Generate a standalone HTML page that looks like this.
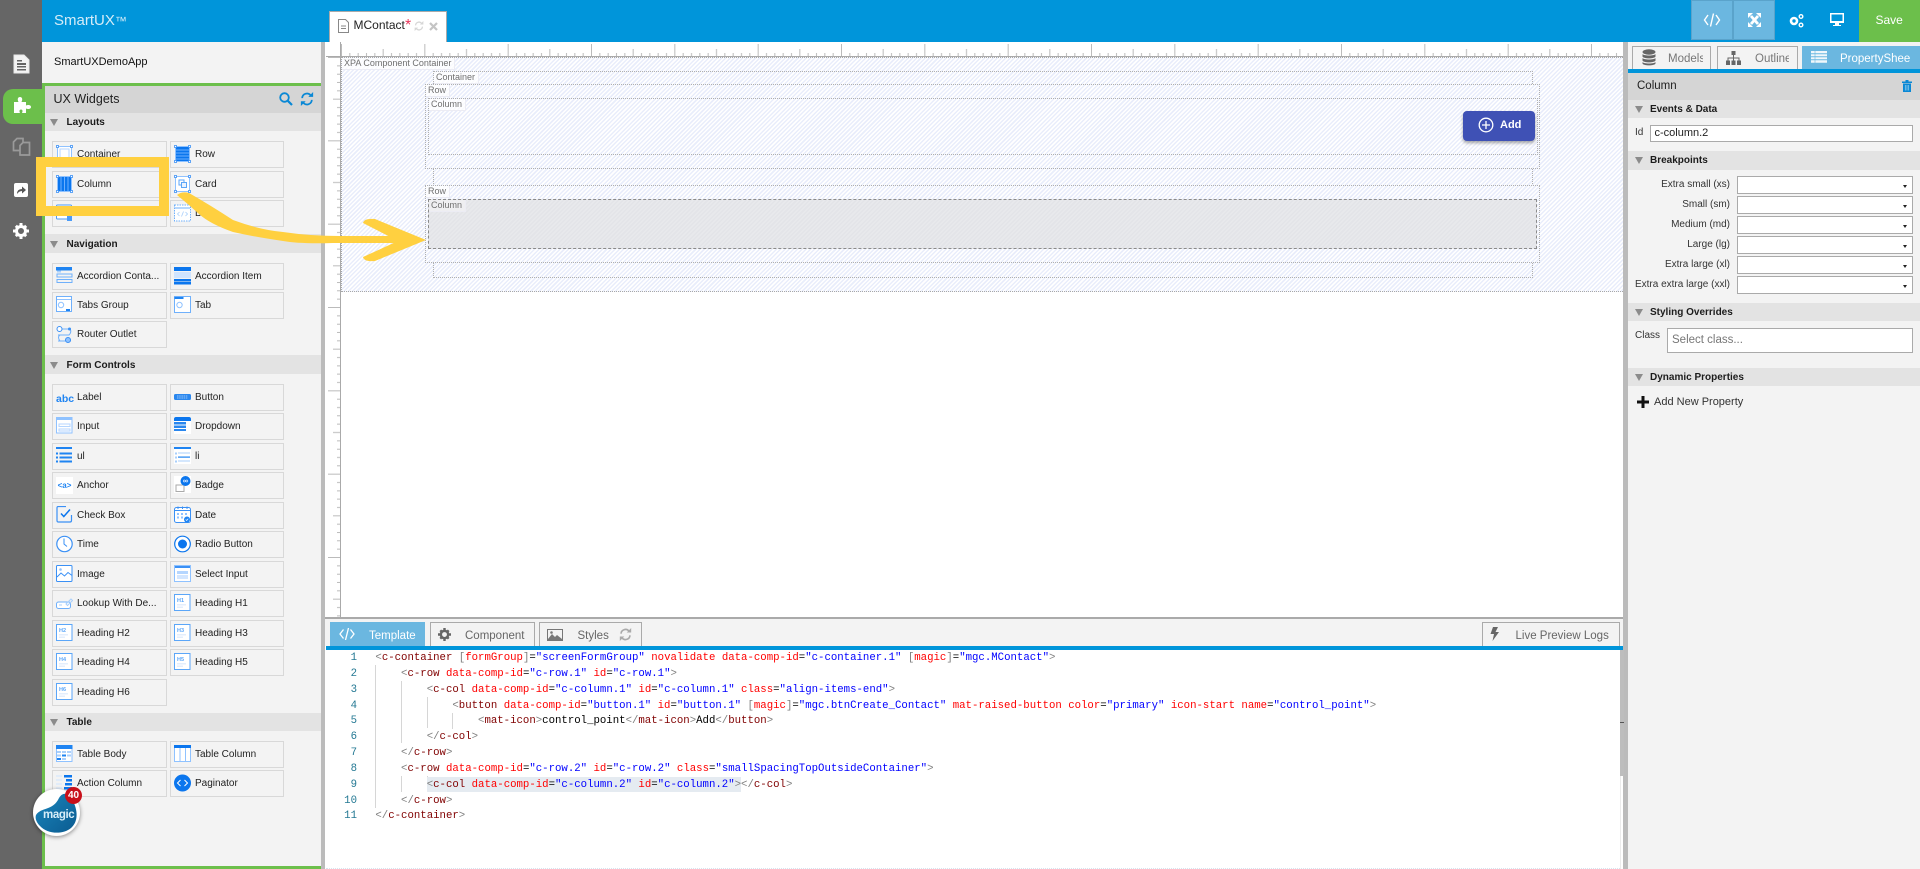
<!DOCTYPE html>
<html lang="en"><head><meta charset="utf-8"><title>SmartUX</title>
<style>
*{box-sizing:border-box}
html,body{margin:0;padding:0;width:1920px;height:869px;overflow:hidden;background:#fff;font-family:"Liberation Sans",Arial,sans-serif;color:#222}
.a{position:absolute}
.t{position:absolute;white-space:nowrap}
.w{position:absolute;width:115px;height:27px;border:1px solid #d8d8d8;background:#f3f3f3}
.w.c2{width:114px}
.w svg{position:absolute;left:3px;top:3px;width:17px;height:18px}
.w span{position:absolute;left:24px;top:6px;font-size:10px;line-height:14px;color:#222;white-space:nowrap}
.sec{position:absolute;left:45px;width:276px;background:#e3e3e3;font-weight:bold;font-size:10px;color:#1c1c1c}
.sec i{position:absolute;left:5px;top:50%;margin-top:-3px;border-left:4.5px solid transparent;border-right:4.5px solid transparent;border-top:7px solid #8b8b8b}
.sec b{position:absolute;left:21.5px;top:50%;margin-top:-6px;line-height:14px;white-space:nowrap}
.rs{position:absolute;left:1628px;width:292px;height:18px;background:#e3e3e3;font-weight:bold;font-size:10px;color:#1c1c1c}
.rs i{position:absolute;left:7px;top:6px;border-left:4.5px solid transparent;border-right:4.5px solid transparent;border-top:7px solid #8b8b8b}
.rs b{position:absolute;left:22px;top:3px;line-height:14px;white-space:nowrap}
.lbl{position:absolute;right:190px;margin-top:1px;font-size:10px;line-height:14px;color:#333;white-space:nowrap}
.sel{position:absolute;left:1737px;width:176px;height:18px;background:#fff;border:1px solid #aaa}
.sel:after{content:"";position:absolute;right:5px;top:8px;border-left:2.5px solid transparent;border-right:2.5px solid transparent;border-top:3px solid #222}
.box{position:absolute;border:1px dotted #b0b0b0}
.hatch{background:repeating-linear-gradient(135deg,#fff 0,#fff 1.5px,#e9edfb 1.5px,#e9edfb 3px) fixed}
.cl{position:absolute;font-size:9px;line-height:11px;color:#6f6f6f;background:rgba(255,255,255,.72);padding:0 3px 0 2px;white-space:nowrap;border-right:1px solid #ececf4;border-bottom:1px solid #ececf4}
.tab{position:absolute;border:1px solid #aaa;border-bottom:0;background:#f3f3f3;color:#666;font-size:11.5px}
.ln{position:absolute;width:32px;left:325px;text-align:right;font:10.69px/16px "Liberation Mono",monospace;color:#237893;height:16px;margin-top:1px}
.cd{position:absolute;left:375.4px;font:10.69px/16px "Liberation Mono",monospace;white-space:pre;height:16px;color:#000;margin-top:1px}
.cd u{text-decoration:none;color:#808080}.cd s{text-decoration:none;color:#800000}.cd em{font-style:normal;color:#f00}.cd q{quotes:none;color:#00f}
.g{position:absolute;width:1px;background:#d6d6d6}
</style></head><body>
<svg width="0" height="0" style="position:absolute">
<defs>
<symbol id="i-cont" viewBox="0 0 17 18"><rect x="1.5" y="1.5" width="14" height="15" fill="#fff" stroke="#8fc2ff"/><rect x="4" y="4" width="9" height="10" fill="none" stroke="#b5d6ff"/><g fill="#fff" stroke="#3a90f5" stroke-width=".8"><rect x=".5" y=".5" width="2" height="2"/><rect x="14.5" y=".5" width="2" height="2"/><rect x=".5" y="15.5" width="2" height="2"/><rect x="14.5" y="15.5" width="2" height="2"/></g></symbol>
<symbol id="i-row" viewBox="0 0 17 18"><rect x="1.5" y="1.5" width="14" height="15" fill="#0b76ee" stroke="#8fc2ff"/><path d="M2 5h13M2 8h13M2 11h13M2 14h13" stroke="#6cb0ff"/><g fill="#fff" stroke="#3a90f5" stroke-width=".8"><rect x=".5" y=".5" width="2" height="2"/><rect x="14.5" y=".5" width="2" height="2"/><rect x=".5" y="15.5" width="2" height="2"/><rect x="14.5" y="15.5" width="2" height="2"/></g></symbol>
<symbol id="i-col" viewBox="0 0 17 18"><rect x="1.5" y="1.5" width="14" height="15" fill="#0b76ee" stroke="#8fc2ff"/><path d="M5 2v14M8.5 2v14M12 2v14" stroke="#6cb0ff"/><g fill="#fff" stroke="#3a90f5" stroke-width=".8"><rect x=".5" y=".5" width="2" height="2"/><rect x="14.5" y=".5" width="2" height="2"/><rect x=".5" y="15.5" width="2" height="2"/><rect x="14.5" y="15.5" width="2" height="2"/></g></symbol>
<symbol id="i-sec" viewBox="0 0 17 18"><rect x=".5" y="1" width="15" height="14" rx="1" fill="#fff" stroke="#4b9bf7"/><rect x="11" y="12" width="5" height="5" fill="#4b9bf7"/></symbol>
<symbol id="i-card" viewBox="0 0 17 18"><rect x="1.5" y="1.5" width="14" height="15" fill="#fff" stroke="#8fc2ff"/><rect x="5" y="5" width="5" height="5" fill="none" stroke="#5ba6f8"/><rect x="7.5" y="7.5" width="5" height="5" fill="#eaf3ff" stroke="#5ba6f8"/><g fill="#fff" stroke="#3a90f5" stroke-width=".8"><rect x=".5" y=".5" width="2" height="2"/><rect x="14.5" y=".5" width="2" height="2"/><rect x=".5" y="15.5" width="2" height="2"/><rect x="14.5" y="15.5" width="2" height="2"/></g></symbol>
<symbol id="i-code" viewBox="0 0 17 18"><rect x=".5" y="1" width="16" height="16" fill="#fff" stroke="#6fb0fb" stroke-dasharray="1.5 1"/><path d="M1 4h15" stroke="#6fb0fb"/><path d="M5.5 8l-2 2 2 2M11.500 8l2 2-2 2M9.500 7.500l-2 5" fill="none" stroke="#a9cffb" stroke-width=".8"/></symbol>
<symbol id="i-acc" viewBox="0 0 17 18"><rect x="0" y="0" width="16" height="3.500" fill="#1f84f2"/><rect x="1" y="3.500" width="4" height="2" fill="#a9cffb"/><path d="M1 7h15v3H1zM1 12.500h15v3H1z" fill="none" stroke="#6fb0fb"/></symbol>
<symbol id="i-acci" viewBox="0 0 17 18"><rect x="0" y="0" width="17" height="4" fill="#0b76ee"/><rect x="0" y="5" width="17" height="6" fill="#cfe4ff"/><rect x="0" y="12" width="17" height="2.500" fill="#0b76ee"/><rect x="0" y="15" width="17" height="2.500" fill="#0b76ee"/></symbol>
<symbol id="i-tabs" viewBox="0 0 17 18"><rect x=".5" y=".5" width="15" height="15" fill="#fff" stroke="#6fb0fb"/><path d="M1 3.500h14" stroke="#8fc2ff"/><circle cx="5" cy="9" r="2.700" fill="none" stroke="#8fc2ff"/><rect x="10" y="13" width="4" height="2" fill="#1f84f2"/></symbol>
<symbol id="i-tab" viewBox="0 0 17 18"><rect x=".5" y=".5" width="16" height="16" fill="#fff" stroke="#6fb0fb"/><path d="M.5 2h9" stroke="#1f84f2" stroke-width="2"/><circle cx="5.500" cy="9" r="2.700" fill="none" stroke="#8fc2ff"/></symbol>
<symbol id="i-rout" viewBox="0 0 17 18"><path d="M2 4h13M2 10h9M2 16h13M14 4q2 3-1 6H4q-3 2 0 6" fill="none" stroke="#6fb0fb"/><circle cx="3.500" cy="4" r="2.500" fill="#fff" stroke="#3a90f5"/><circle cx="13.500" cy="4" r="1.500" fill="#3a90f5"/><circle cx="12" cy="15" r="2.500" fill="#8fc2ff" stroke="#3a90f5"/></symbol>
<symbol id="i-btn" viewBox="0 0 17 18"><rect x="0" y="6" width="17" height="6" rx="1.500" fill="#2a87ee"/><path d="M3 8h11M3 10h11" stroke="#bcdcff" stroke-width=".7" stroke-dasharray="1.500 .7"/></symbol>
<symbol id="i-inp" viewBox="0 0 17 18"><rect x=".5" y=".5" width="15.500" height="15.500" fill="#fff" stroke="#8fc2ff"/><rect x="1" y="1" width="15" height="2" fill="#8fc2ff"/><rect x="3" y="7" width="11" height="2.500" fill="none" stroke="#b5d6ff"/><rect x="3" y="12" width="11" height="2" fill="none" stroke="#b5d6ff"/></symbol>
<symbol id="i-drop" viewBox="0 0 17 18"><rect width="17" height="17" fill="#fff"/><path d="M0 2q0-2 2-2h13q2 0 2 2v2H0z" fill="#0b76ee"/><path d="M0 5h12v2.500H0zM0 8.500h12V11H0zM0 12h12v2H0z" fill="#2a87ee"/></symbol>
<symbol id="i-ul" viewBox="0 0 17 18"><rect x="0" y="0" width="16" height="2" fill="#1f84f2"/><path d="M0 5.500h2v2H0zM3.500 5.500H16v2H3.500zM0 9.500h2v2H0zM3.500 9.500H16v2H3.500zM0 13.500h2v2H0zM3.500 13.500H16v2H3.500z" fill="#1f84f2"/></symbol>
<symbol id="i-li" viewBox="0 0 17 18"><rect width="17" height="17" fill="#fff"/><rect x="0" y="0" width="17" height="2" fill="#1f84f2"/><path d="M1 5.500h2v2H1zM4 5.500h12v1H4zM1 9.500h2v2H1zM1 13.500h2v2H1zM4 13.500h12v1H4z" fill="#a9cffb"/><path d="M4 9.500h12v1.200H4z" fill="#1f84f2"/></symbol>
<symbol id="i-badge" viewBox="0 0 17 18"><rect width="17" height="17" fill="#fff"/><rect x="2" y="9" width="8" height="6.500" fill="none" stroke="#aaa"/><circle cx="11.500" cy="5" r="5" fill="#0b76ee"/><path d="M9.300 5a1 1 0 1 0 2 0a1 1 0 1 0-2 0M11.800 5a1 1 0 1 0 2 0a1 1 0 1 0-2 0" fill="none" stroke="#cfe4ff" stroke-width=".7"/></symbol>
<symbol id="i-check" viewBox="0 0 17 18"><path d="M15.500 9v5.500q0 1.500-1.500 1.500H2.500Q1 16 1 14.500V2q0-1.500 1.500-1.500H10" fill="none" stroke="#3a90f5" stroke-width="1.200"/><path d="M5 7.500l2.800 3L14 3.500" fill="none" stroke="#0b76ee" stroke-width="1.500"/></symbol>
<symbol id="i-date" viewBox="0 0 17 18"><rect x=".5" y="1.500" width="16" height="15" rx="2" fill="#fff" stroke="#3a90f5"/><path d="M1 4.500h15M4 .5v2.500M8.500 .5v2.500M13 .5v2.500" stroke="#3a90f5"/><path d="M3 7h2v2H3zM7 7h2v2H7zM11 7h2v2h-2zM3 10.500h2v2H3zM7 10.500h2v2H7z" fill="#8fc2ff"/><circle cx="13" cy="13.500" r="3" fill="#1f84f2"/><path d="M11.700 13.500l1 1 1.500-1.800" stroke="#fff" stroke-width=".7" fill="none"/></symbol>
<symbol id="i-time" viewBox="0 0 17 18"><circle cx="8.500" cy="9" r="7.700" fill="#fff" stroke="#3a90f5" stroke-width="1.200"/><path d="M8 3.500V9l3 2.500" fill="none" stroke="#3a90f5"/></symbol>
<symbol id="i-radio" viewBox="0 0 17 18"><circle cx="8.500" cy="9" r="7.800" fill="#fff" stroke="#0b76ee" stroke-width="1.200"/><circle cx="8.500" cy="9" r="4.500" fill="#0b76ee"/></symbol>
<symbol id="i-img" viewBox="0 0 17 18"><rect x=".5" y=".5" width="15.500" height="16" rx="1" fill="#fff" stroke="#3a90f5"/><path d="M1 12l4-4 3.500 3 3.500-3.500 4 3" fill="none" stroke="#3a90f5"/><circle cx="4.500" cy="4.500" r="1.300" fill="#8fc2ff"/></symbol>
<symbol id="i-seli" viewBox="0 0 17 18"><rect x=".5" y=".5" width="16" height="16" fill="#fff" stroke="#8fc2ff"/><rect x="1" y="1" width="15" height="2" fill="#3a90f5"/><rect x="3" y="6" width="11" height="3" fill="#b5d6ff"/><rect x="3" y="10" width="11" height="4" fill="#d3e6ff"/></symbol>
<symbol id="i-look" viewBox="0 0 17 18"><rect x=".5" y="8" width="14" height="6.500" rx="2" fill="#fff" stroke="#6fb0fb"/><path d="M10 10l5-5 1.500 1.500-5 5zM3 11h3" fill="none" stroke="#a9cffb"/></symbol>
<symbol id="i-tb" viewBox="0 0 17 18"><rect x=".5" y=".5" width="15.500" height="16" fill="#fff" stroke="#8fc2ff"/><rect x="0" y="0" width="16.500" height="4" fill="#1f84f2"/><path d="M1 6h4v2H1zM6 6h4v2H6zM11 6h4v2h-4zM1 9.500h4v2H1zM11 9.500h4v2h-4zM6 13h4v2H6z" fill="#a9cffb"/><path d="M1 13h4v2H1zM6 9.500h4v2H6z" fill="#1f84f2"/></symbol>
<symbol id="i-tc" viewBox="0 0 17 18"><rect x=".5" y=".5" width="16" height="16" fill="#fff" stroke="#8fc2ff"/><rect x="0" y="0" width="17" height="3" fill="#0b76ee"/><path d="M6 3v14M11.500 3v14" stroke="#8fc2ff"/></symbol>
<symbol id="i-ac" viewBox="0 0 17 18"><path d="M0 2h6M0 6h6M0 10h6M0 14h6" stroke="#cfe4ff"/><path d="M8 1h8v2.500H8zM10 5h6v2.500h-6zM9 9h7v2.500H9zM8 13h8v2.500H8z" fill="#0b76ee"/></symbol>
<symbol id="i-pag" viewBox="0 0 17 18"><circle cx="8.500" cy="9" r="8.500" fill="#0b76ee"/><path d="M6.500 6l-3 3 3 3M10.500 6l3 3-3 3" fill="none" stroke="#fff"/></symbol>
<symbol id="i-h" viewBox="0 0 17 18"><rect x=".5" y=".5" width="15.500" height="16" fill="#fff" stroke="#5ba6f8"/><rect x="3" y="10" width="9" height="1.500" fill="#e3eefc"/><rect x="3" y="12.500" width="6" height="1.500" fill="#e3eefc"/></symbol>
<symbol id="i-sync" viewBox="0 0 16 16"><path d="M2.500 7A5.500 5.500 0 0 1 12 3.500M13.500 9A5.500 5.500 0 0 1 4 12.500" fill="none" stroke="currentColor" stroke-width="2"/><path d="M9.500 5.500H15V0zM6.500 10.500H1V16z" fill="currentColor"/></symbol>
<pattern id="rt" x="341" y="0" width="83.333" height="14" patternUnits="userSpaceOnUse"><path d="M.5 2v12M42.170 7v7M8.830 11v3M17.170 11v3M25.500 11v3M33.830 11v3M50.500 11v3M58.830 11v3M67.170 11v3M75.500 11v3" stroke="#bbb" fill="none"/></pattern>
<pattern id="rl" x="0" y="57" width="15" height="83.333" patternUnits="userSpaceOnUse"><path d="M2 .5h13M7 42.170h8M11 8.830h4M11 17.170h4M11 25.500h4M11 33.830h4M11 50.500h4M11 58.830h4M11 67.170h4M11 75.500h4" stroke="#bbb" fill="none"/></pattern>
</defs></svg>

<!-- Top bar + rail -->
<div class="a" style="left:0;top:0;width:42px;height:869px;background:#666"></div>
<div class="a" style="left:42px;top:0;width:1878px;height:42px;background:#0095da"></div>
<div class="t" style="left:54px;top:12px;font-size:15px;line-height:18px;color:#d4ecf8">SmartUX<span style="font-size:12px">™</span></div>

<!-- Rail icons -->
<svg class="a" style="left:12px;top:54px" width="18" height="20" viewBox="0 0 18 20"><path d="M2 1h10l5 5v13H2z" fill="#f4f4f4" stroke="#e8e8e8"/><path d="M5 9h9v2H5zM5 12h9v1.500H5zM5 15h9v1.500H5zM5 6h5v1.500H5z" fill="#666"/></svg>
<div class="a" style="left:3px;top:89px;width:39px;height:35px;background:#6cbf4b;border-radius:10px 0 0 10px"></div>
<svg class="a" style="left:13px;top:96px" width="19" height="18" viewBox="0 0 19 18"><path d="M1 6h4.500C4 3 5 1 7 1s3 2 1.500 5H13v3.500c2-1 5-.5 5 1.500s-3 2.500-5 1.500V17H9c1-2 .5-3.500-1-3.500S6 15 7 17H1z" fill="#fff"/></svg>
<svg class="a" style="left:12px;top:137px" width="19" height="19" viewBox="0 0 19 19" fill="none" stroke="#9a9a9a" stroke-width="1.700"><path d="M7.500 13.500H1.500V5L5 1.500h6V5"/><path d="M8 8.500L11 5.500h6.500v12.500H8z"/></svg>
<svg class="a" style="left:14px;top:183px" width="14" height="14" viewBox="0 0 14 14"><rect width="14" height="14" rx="2" fill="#fff"/><path d="M3 11q0-5 5-5V3.500L12 7 8 10.500V8q-3 0-5 3z" fill="#555"/></svg>
<svg class="a" style="left:13px;top:223px" width="16" height="16" viewBox="0 0 16 16"><circle cx="8" cy="8" r="4.500" fill="none" stroke="#fff" stroke-width="3"/><path d="M6.500 0h3v3h-3zM6.500 13h3v3h-3zM0 6.500h3v3H0zM13 6.500h3v3h-3zM1.800 3.900l2.100-2.100 2 2-2.100 2.100zM10.100 12.100l2-2.100 2.100 2.100-2.100 2.100zM1.800 12.100l2.100-2.100 2 2-2.100 2.100zM10.100 3.900l2-2.100 2.100 2.100-2.100 2.100z" fill="#fff"/></svg>

<!-- Left panel -->
<div class="a" style="left:42px;top:42px;width:279px;height:827px;background:#f3f3f3"></div>
<div class="t" style="left:54px;top:55px;font-size:11px;line-height:14px;color:#111">SmartUXDemoApp</div>
<div class="a" style="left:42px;top:83px;width:279px;height:3px;background:#6cbf4b"></div>
<div class="a" style="left:42px;top:83px;width:3px;height:786px;background:#6cbf4b"></div>
<div class="a" style="left:42px;top:866px;width:279px;height:3px;background:#6cbf4b"></div>
<div class="a" style="left:45px;top:86px;width:276px;height:27px;background:#d5d5d5"></div>
<div class="t" style="left:53.500px;top:91px;font-size:12.500px;line-height:16px;color:#222">UX Widgets</div>
<svg class="a" style="left:279px;top:92px" width="14" height="14" viewBox="0 0 14 14" fill="none" stroke="#0a88d5" stroke-width="1.800"><circle cx="5.500" cy="5.500" r="4.300"/><path d="M8.800 8.800L13 13" stroke-width="2.200"/></svg>
<svg class="a" style="left:300px;top:92px;color:#0a88d5" width="14" height="14"><use href="#i-sync"/></svg>

<div class="sec" style="top:113px;height:18px"><i></i><b>Layouts</b></div>
<div class="w" style="left:52px;top:141px"><svg><use href="#i-cont"/></svg><span>Container</span></div>
<div class="w c2" style="left:170px;top:141px"><svg><use href="#i-row"/></svg><span>Row</span></div>
<div class="w" style="left:52px;top:171px"><svg><use href="#i-col"/></svg><span>Column</span></div>
<div class="w c2" style="left:170px;top:171px"><svg><use href="#i-card"/></svg><span>Card</span></div>
<div class="w" style="left:52px;top:200px"><svg><use href="#i-sec"/></svg><span>Section</span></div>
<div class="w c2" style="left:170px;top:200px"><svg><use href="#i-code"/></svg><span>Div</span></div>

<div class="sec" style="top:234px;height:19px"><i></i><b>Navigation</b></div>
<div class="w" style="left:52px;top:263px"><svg><use href="#i-acc"/></svg><span>Accordion Conta...</span></div>
<div class="w c2" style="left:170px;top:263px"><svg><use href="#i-acci"/></svg><span>Accordion Item</span></div>
<div class="w" style="left:52px;top:292px"><svg><use href="#i-tabs"/></svg><span>Tabs Group</span></div>
<div class="w c2" style="left:170px;top:292px"><svg><use href="#i-tab"/></svg><span>Tab</span></div>
<div class="w" style="left:52px;top:321px"><svg><use href="#i-rout"/></svg><span>Router Outlet</span></div>

<div class="sec" style="top:355px;height:19px"><i></i><b>Form Controls</b></div>
<div class="w" style="left:52px;top:384px"><b class="a" style="left:3px;top:8px;font-size:10.500px;line-height:12px;color:#1f84f2">abc</b><span>Label</span></div>
<div class="w c2" style="left:170px;top:384px"><svg><use href="#i-btn"/></svg><span>Button</span></div>
<div class="w" style="left:52px;top:413px"><svg><use href="#i-inp"/></svg><span>Input</span></div>
<div class="w c2" style="left:170px;top:413px"><svg><use href="#i-drop"/></svg><span>Dropdown</span></div>
<div class="w" style="left:52px;top:443px"><svg><use href="#i-ul"/></svg><span>ul</span></div>
<div class="w c2" style="left:170px;top:443px"><svg><use href="#i-li"/></svg><span>li</span></div>
<div class="w" style="left:52px;top:472px"><div class="a" style="left:3px;top:4px;width:17px;height:17px;background:#fff;color:#1f84f2;font:bold 8px/18px 'Liberation Sans',sans-serif;text-align:center">&lt;a&gt;</div><span>Anchor</span></div>
<div class="w c2" style="left:170px;top:472px"><svg><use href="#i-badge"/></svg><span>Badge</span></div>
<div class="w" style="left:52px;top:502px"><svg><use href="#i-check"/></svg><span>Check Box</span></div>
<div class="w c2" style="left:170px;top:502px"><svg><use href="#i-date"/></svg><span>Date</span></div>
<div class="w" style="left:52px;top:531px"><svg><use href="#i-time"/></svg><span>Time</span></div>
<div class="w c2" style="left:170px;top:531px"><svg><use href="#i-radio"/></svg><span>Radio Button</span></div>
<div class="w" style="left:52px;top:561px"><svg><use href="#i-img"/></svg><span>Image</span></div>
<div class="w c2" style="left:170px;top:561px"><svg><use href="#i-seli"/></svg><span>Select Input</span></div>
<div class="w" style="left:52px;top:590px"><svg><use href="#i-look"/></svg><span>Lookup With De...</span></div>
<div class="w c2" style="left:170px;top:590px"><svg><use href="#i-h"/></svg><b class="a" style="left:6px;top:6px;font-size:5.500px;line-height:8px;color:#5ba6f8">H1</b><span>Heading H1</span></div>
<div class="w" style="left:52px;top:620px"><svg><use href="#i-h"/></svg><b class="a" style="left:6px;top:6px;font-size:5.500px;line-height:8px;color:#5ba6f8">H2</b><span>Heading H2</span></div>
<div class="w c2" style="left:170px;top:620px"><svg><use href="#i-h"/></svg><b class="a" style="left:6px;top:6px;font-size:5.500px;line-height:8px;color:#5ba6f8">H3</b><span>Heading H3</span></div>
<div class="w" style="left:52px;top:649px"><svg><use href="#i-h"/></svg><b class="a" style="left:6px;top:6px;font-size:5.500px;line-height:8px;color:#5ba6f8">H4</b><span>Heading H4</span></div>
<div class="w c2" style="left:170px;top:649px"><svg><use href="#i-h"/></svg><b class="a" style="left:6px;top:6px;font-size:5.500px;line-height:8px;color:#5ba6f8">H5</b><span>Heading H5</span></div>
<div class="w" style="left:52px;top:679px"><svg><use href="#i-h"/></svg><b class="a" style="left:6px;top:6px;font-size:5.500px;line-height:8px;color:#5ba6f8">H6</b><span>Heading H6</span></div>

<div class="sec" style="top:713px;height:18px"><i></i><b>Table</b></div>
<div class="w" style="left:52px;top:741px"><svg><use href="#i-tb"/></svg><span>Table Body</span></div>
<div class="w c2" style="left:170px;top:741px"><svg><use href="#i-tc"/></svg><span>Table Column</span></div>
<div class="w" style="left:52px;top:770px"><svg><use href="#i-ac"/></svg><span>Action Column</span></div>
<div class="w c2" style="left:170px;top:770px"><svg><use href="#i-pag"/></svg><span>Paginator</span></div>

<!-- Splitters -->
<div class="a" style="left:321px;top:42px;width:4px;height:827px;background:#bbb"></div>
<div class="a" style="left:1623px;top:42px;width:5px;height:827px;background:#bbb"></div>

<!-- Rulers -->
<svg class="a" style="left:0;top:42px" width="1623" height="14"><rect x="341" width="1282" height="14" fill="url(#rt)"/></svg>
<svg class="a" style="left:326px;top:0" width="15" height="617"><rect y="57" width="15" height="560" fill="url(#rl)"/></svg>
<div class="a" style="left:326px;top:56px;width:1297px;height:1px;background:#aaa"></div>
<div class="a" style="left:340px;top:42px;width:1px;height:575px;background:#aaa"></div>

<!-- Canvas -->
<div class="a hatch" style="left:341px;top:57px;width:1282px;height:235px;border-top:1px dotted #a8a8a8;border-bottom:1px dotted #a8a8a8;border-left:1px dotted #a8a8a8"></div>
<div class="cl" style="left:342px;top:58px">XPA Component Container</div>
<div class="box" style="left:433px;top:71px;width:1100px;height:207px"></div>
<div class="cl" style="left:434px;top:72px">Container</div>
<div class="box hatch" style="left:425px;top:84px;width:1115px;height:85px"></div>
<div class="cl" style="left:426px;top:85px">Row</div>
<div class="box" style="left:428px;top:98px;width:1110px;height:57px"></div>
<div class="cl" style="left:429px;top:99px">Column</div>
<div class="box hatch" style="left:425px;top:185px;width:1115px;height:78px"></div>
<div class="cl" style="left:426px;top:186px">Row</div>
<div class="box" style="left:428px;top:199px;width:1109px;height:50px;border:1px dashed #8a8a8a;background:repeating-linear-gradient(135deg,#e8e9ec 0,#e8e9ec 1.5px,#e3e4e8 1.5px,#e3e4e8 3px)"></div>
<div class="cl" style="left:429px;top:200px;background:rgba(240,240,242,.8)">Column</div>
<div class="a" style="left:1463px;top:111px;width:72px;height:30px;background:#3f51b5;border-radius:4px;box-shadow:0 2px 3px rgba(0,0,0,.35)"></div>
<svg class="a" style="left:1478px;top:117px" width="16" height="16" viewBox="0 0 16 16" fill="none" stroke="#fff" stroke-width="1.300"><circle cx="8" cy="8" r="6.800"/><path d="M8 4v8M4 8h8"/></svg>
<div class="t" style="left:1500px;top:118px;font-size:11px;line-height:14px;font-weight:bold;color:#fff">Add</div>

<!-- Top-right buttons -->
<div class="a" style="left:1691px;top:0;width:42px;height:40px;background:#6bb7e0;border:1px solid #5aa3cb"></div>
<div class="a" style="left:1733px;top:0;width:42px;height:40px;background:#6bb7e0;border:1px solid #5aa3cb"></div>
<svg class="a" style="left:1703px;top:12px" width="18" height="16" viewBox="0 0 18 16" fill="none" stroke="#fff" stroke-width="1.400"><path d="M5 3L1.500 8 5 13M13 3l3.500 5L13 13M10.500 1.500l-3 13"/></svg>
<svg class="a" style="left:1748px;top:13px" width="13" height="14" viewBox="0 0 13 14"><path d="M3 3l7 8M10 3l-7 8" stroke="#fff" stroke-width="2.800"/><path d="M0 0h5L0 5zM13 0v5L8 0zM0 14V9l5 5zM13 14H8l5-5z" fill="#fff"/></svg>
<svg class="a" style="left:1789px;top:13px" width="15" height="15" viewBox="0 0 15 15"><circle cx="5" cy="8" r="3" fill="none" stroke="#fff" stroke-width="2.600"/><circle cx="12" cy="3.500" r="1.800" fill="none" stroke="#fff" stroke-width="1.400"/><circle cx="12" cy="12" r="1.800" fill="none" stroke="#fff" stroke-width="1.400"/></svg>
<svg class="a" style="left:1830px;top:13px" width="14" height="13" viewBox="0 0 14 13"><path d="M0 0h14v10H0z" fill="#fff"/><path d="M1.500 1.500h11V8h-11z" fill="#0095da"/><path d="M5 10h4v2h2v1H3v-1h2z" fill="#fff"/></svg>
<div class="a" style="left:1859px;top:0;width:61px;height:42px;background:#6cbf4b"></div>
<div class="t" style="left:1875.500px;top:13px;font-size:12px;line-height:15px;color:#fff">Save</div>

<!-- Doc tab -->
<div class="a" style="left:329px;top:11px;width:118px;height:31px;background:#fff;border:1px solid #aaa;border-bottom:0"></div>
<svg class="a" style="left:338px;top:19px" width="11" height="14" viewBox="0 0 11 14" fill="none" stroke="#888"><path d="M.5.500h7l3 3v10H.500z"/><path d="M3 7h5M3 9.500h5"/></svg>
<div class="t" style="left:353.500px;top:18px;font-size:12px;line-height:15px;color:#222">MContact</div>
<div class="t" style="left:405px;top:18px;font-size:16px;line-height:15px;color:#e8385c">*</div>
<svg class="a" style="left:414px;top:21px;color:#d6d6d6" width="10" height="10"><use href="#i-sync"/></svg>
<svg class="a" style="left:429px;top:22px" width="9" height="9" viewBox="0 0 9 9" stroke="#c4c4c4" stroke-width="2.200"><path d="M1 1l7 7M8 1L1 8"/></svg>

<!-- Yellow annotation -->
<svg class="a" style="left:0;top:0;pointer-events:none" width="500" height="300" viewBox="0 0 500 300">
<path d="M36 157H169V216H36zM46 167V206H159V167z" fill="#ffd040" fill-rule="evenodd"/>
<path d="M177 195Q182 191 189 193 210 205 233 220 260 230 283 232 310 236 340 236L402 236 V243 L333 243Q300 244 283 241 255 237 233 232 210 224 199 214 188 204 177 195z" fill="#ffd040"/>
<path d="M363 223Q364 218 375 219L426 240 375 261Q364 262 363 257L398 241z" fill="#ffd040"/>
</svg>

<!-- Bottom tabs -->
<div class="a" style="left:325px;top:617px;width:1298px;height:2px;background:#aaa"></div>
<div class="a" style="left:325px;top:619px;width:1298px;height:27px;background:#f3f3f3"></div>
<div class="a" style="left:330px;top:622px;width:95px;height:24px;background:#6bb7e0"></div>
<svg class="a" style="left:339px;top:628px" width="16" height="12" viewBox="0 0 16 12" fill="none" stroke="#fff" stroke-width="1.300"><path d="M4.500 1.500L1 6l3.500 4.500M11.500 1.500L15 6l-3.500 4.500M9.500 0l-3 12"/></svg>
<div class="t" style="left:369px;top:629px;font-size:11.500px;line-height:14px;color:#fff">Template</div>
<div class="tab" style="left:430px;top:622px;width:105px;height:24px"></div>
<svg class="a" style="left:438px;top:628px" width="13" height="13" viewBox="0 0 16 16"><circle cx="8" cy="8" r="4.500" fill="none" stroke="#666" stroke-width="3"/><path d="M6.500 0h3v3h-3zM6.500 13h3v3h-3zM0 6.500h3v3H0zM13 6.500h3v3h-3zM1.800 3.900l2.100-2.100 2 2-2.100 2.100zM10.100 12.100l2-2.100 2.100 2.100-2.100 2.100zM1.800 12.100l2.100-2.100 2 2-2.100 2.100zM10.100 3.900l2-2.100 2.100 2.100-2.100 2.100z" fill="#666"/></svg>
<div class="t" style="left:465px;top:629px;font-size:11.500px;line-height:14px;color:#666">Component</div>
<div class="tab" style="left:539px;top:622px;width:103px;height:24px"></div>
<svg class="a" style="left:547px;top:629px" width="16" height="12" viewBox="0 0 16 12"><rect x=".5" y=".5" width="15" height="11" fill="none" stroke="#777"/><path d="M1 10l4-5 3 3 2-2 5 4v1H1z" fill="#777"/><circle cx="4.500" cy="3.500" r="1.300" fill="#777"/></svg>
<div class="t" style="left:577.500px;top:629px;font-size:11.500px;line-height:14px;color:#666">Styles</div>
<svg class="a" style="left:619px;top:628px;color:#aaa" width="13" height="13"><use href="#i-sync"/></svg>
<div class="tab" style="left:1482px;top:622px;width:138px;height:24px"></div>
<svg class="a" style="left:1490px;top:627px" width="9" height="14" viewBox="0 0 9 14"><path d="M3 0h5L5.500 5H9L2.500 14 4 7H.500z" fill="#666"/></svg>
<div class="t" style="left:1515.500px;top:629px;font-size:11.500px;line-height:14px;color:#666">Live Preview Logs</div>
<div class="a" style="left:326px;top:646px;width:1297px;height:4px;background:#0095da"></div>

<!-- Editor -->
<div class="g" style="left:375px;top:665px;height:143px"></div>
<div class="g" style="left:401px;top:681px;height:62px"></div>
<div class="g" style="left:401px;top:776px;height:16px"></div>
<div class="g" style="left:427px;top:697px;height:31px"></div>
<div class="g" style="left:427px;top:776px;height:16px"></div>
<div class="g" style="left:452px;top:713px;height:16px"></div>
<div class="a" style="left:427px;top:777px;width:314px;height:15px;background:#e5ebf1"></div>

<div class="ln" style="top:649px">1</div>
<div class="ln" style="top:665px">2</div>
<div class="ln" style="top:681px">3</div>
<div class="ln" style="top:697px">4</div>
<div class="ln" style="top:712px">5</div>
<div class="ln" style="top:728px">6</div>
<div class="ln" style="top:744px">7</div>
<div class="ln" style="top:760px">8</div>
<div class="ln" style="top:776px">9</div>
<div class="ln" style="top:792px">10</div>
<div class="ln" style="top:807px">11</div>

<div class="cd" style="top:649px"><u>&lt;</u><s>c-container</s> <u>[</u><em>formGroup</em><u>]</u>=<q>"screenFormGroup"</q> <em>novalidate</em> <em>data-comp-id</em>=<q>"c-container.1"</q> <u>[</u><em>magic</em><u>]</u>=<q>"mgc.MContact"</q><u>&gt;</u></div>
<div class="cd" style="top:665px">    <u>&lt;</u><s>c-row</s> <em>data-comp-id</em>=<q>"c-row.1"</q> <em>id</em>=<q>"c-row.1"</q><u>&gt;</u></div>
<div class="cd" style="top:681px">        <u>&lt;</u><s>c-col</s> <em>data-comp-id</em>=<q>"c-column.1"</q> <em>id</em>=<q>"c-column.1"</q> <em>class</em>=<q>"align-items-end"</q><u>&gt;</u></div>
<div class="cd" style="top:697px">            <u>&lt;</u><s>button</s> <em>data-comp-id</em>=<q>"button.1"</q> <em>id</em>=<q>"button.1"</q> <u>[</u><em>magic</em><u>]</u>=<q>"mgc.btnCreate_Contact"</q> <em>mat-raised-button</em> <em>color</em>=<q>"primary"</q> <em>icon-start</em> <em>name</em>=<q>"control_point"</q><u>&gt;</u></div>
<div class="cd" style="top:712px">                <u>&lt;</u><s>mat-icon</s><u>&gt;</u>control_point<u>&lt;/</u><s>mat-icon</s><u>&gt;</u>Add<u>&lt;/</u><s>button</s><u>&gt;</u></div>
<div class="cd" style="top:728px">        <u>&lt;/</u><s>c-col</s><u>&gt;</u></div>
<div class="cd" style="top:744px">    <u>&lt;/</u><s>c-row</s><u>&gt;</u></div>
<div class="cd" style="top:760px">    <u>&lt;</u><s>c-row</s> <em>data-comp-id</em>=<q>"c-row.2"</q> <em>id</em>=<q>"c-row.2"</q> <em>class</em>=<q>"smallSpacingTopOutsideContainer"</q><u>&gt;</u></div>
<div class="cd" style="top:776px">        <u>&lt;</u><s>c-col</s> <em>data-comp-id</em>=<q>"c-column.2"</q> <em>id</em>=<q>"c-column.2"</q><u>&gt;&lt;/</u><s>c-col</s><u>&gt;</u></div>
<div class="cd" style="top:792px">    <u>&lt;/</u><s>c-row</s><u>&gt;</u></div>
<div class="cd" style="top:807px"><u>&lt;/</u><s>c-container</s><u>&gt;</u></div>

<div class="a" style="left:1620px;top:650px;width:4px;height:126px;background:#bdbdbd"></div>
<div class="a" style="left:1620px;top:776px;width:1px;height:93px;background:#ececec"></div>
<div class="a" style="left:1620px;top:722px;width:4px;height:1px;background:#555"></div>
<div class="a" style="left:326px;top:868px;width:1294px;height:0;border-top:1px dotted #d5e5f0"></div>

<!-- Right panel -->
<div class="a" style="left:1628px;top:42px;width:292px;height:827px;background:#f3f3f3"></div>
<div class="tab" style="left:1632px;top:46px;width:79px;height:23px"></div>
<svg class="a" style="left:1642px;top:49px" width="14" height="17" viewBox="0 0 14 17" fill="#666"><ellipse cx="7" cy="3" rx="6.500" ry="2.700"/><path d="M.5 5c1 2 12 2 13 0v2.500c-1 2.500-12 2.500-13 0zM.5 9c1 2 12 2 13 0v2.500c-1 2.500-12 2.500-13 0zM.5 13c1 2 12 2 13 0v1.500c-1 2.500-12 2.500-13 0z"/></svg>
<div class="a" style="left:1668px;top:49px;width:35px;height:20px;overflow:hidden;font-size:11.500px;line-height:20px;color:#777;white-space:nowrap">Models</div>
<div class="tab" style="left:1717px;top:46px;width:81px;height:23px"></div>
<svg class="a" style="left:1726px;top:51px" width="15" height="14" viewBox="0 0 15 14" fill="#666"><path d="M5.500 0h4v4h-4zM0 9.500h4V14H0zM5.500 9.500h4V14h-4zM11 9.500h4V14h-4z"/><path d="M7.500 4v3M2 9.500V7h11v2.500M7.500 7v2.500" fill="none" stroke="#666"/></svg>
<div class="a" style="left:1755px;top:49px;width:34px;height:20px;overflow:hidden;font-size:11.500px;line-height:20px;color:#777;white-space:nowrap">Outline</div>
<div class="a" style="left:1802px;top:46px;width:118px;height:23px;background:#6bb7e0"></div>
<svg class="a" style="left:1811px;top:51px" width="16" height="13" viewBox="0 0 16 13" fill="#fff" opacity=".9"><path d="M0 0h16v2.200H0zM0 3.300h16v2H0zM0 6.300h16v2H0zM0 9.300h16v2.500H0z"/><path d="M4 0v12" stroke="#6bb7e0" stroke-width=".6"/></svg>
<div class="t" style="left:1840px;top:49px;font-size:11.500px;line-height:20px;color:#fff">PropertyShee</div>
<div class="a" style="left:1628px;top:69px;width:292px;height:4px;background:#0095da"></div>
<div class="a" style="left:1628px;top:73px;width:292px;height:27px;background:#d5d5d5"></div>
<div class="t" style="left:1637px;top:78px;font-size:11.500px;line-height:16px;color:#222">Column</div>
<svg class="a" style="left:1902px;top:80px" width="10" height="12" viewBox="0 0 10 12"><path d="M0 1.500h10V3H0zM3.500 0h3v1.500h-3z" fill="#0a88d5"/><path d="M1 3.500h8V12H1z" fill="#0a88d5"/><path d="M3.300 5v5.500M5 5v5.500M6.700 5v5.500" stroke="#9fd4f0" stroke-width=".7"/></svg>

<div class="rs" style="top:100px"><i></i><b>Events &amp; Data</b></div>
<div class="t" style="left:1635px;top:126px;font-size:10px;line-height:14px;color:#333">Id</div>
<div class="a" style="left:1650px;top:125px;width:263px;height:17px;background:#fff;border:1px solid #aaa"></div>
<div class="t" style="left:1654.500px;top:126px;font-size:11px;line-height:15px;color:#222">c-column.2</div>

<div class="rs" style="top:151px;height:19px"><i></i><b>Breakpoints</b></div>
<div class="lbl" style="top:177px">Extra small (xs)</div><div class="sel" style="top:176px"></div>
<div class="lbl" style="top:197px">Small (sm)</div><div class="sel" style="top:196px"></div>
<div class="lbl" style="top:217px">Medium (md)</div><div class="sel" style="top:216px"></div>
<div class="lbl" style="top:237px">Large (lg)</div><div class="sel" style="top:236px"></div>
<div class="lbl" style="top:257px">Extra large (xl)</div><div class="sel" style="top:256px"></div>
<div class="lbl" style="top:277px">Extra extra large (xxl)</div><div class="sel" style="top:276px"></div>

<div class="rs" style="top:303px"><i></i><b>Styling Overrides</b></div>
<div class="t" style="left:1635px;top:329px;font-size:10px;line-height:14px;color:#333">Class</div>
<div class="a" style="left:1667px;top:328px;width:246px;height:25px;background:#fff;border:1px solid #aaa"></div>
<div class="t" style="left:1672px;top:333px;font-size:11.500px;line-height:15px;color:#777">Select class...</div>

<div class="rs" style="top:368px"><i></i><b>Dynamic Properties</b></div>
<svg class="a" style="left:1637px;top:396px" width="12" height="12" viewBox="0 0 12 12"><path d="M4.500 0h3v4.500H12v3H7.500V12h-3V7.500H0v-3h4.500z" fill="#111"/></svg>
<div class="t" style="left:1654px;top:395px;font-size:11px;line-height:15px;color:#333">Add New Property</div>

<!-- Magic badge -->
<div class="a" style="left:33px;top:789px;width:47px;height:47px;border-radius:50%;background:#fff;box-shadow:0 1px 4px rgba(0,0,0,.45)"></div>
<svg class="a" style="left:33px;top:789px" width="47" height="47" viewBox="0 0 47 47"><defs><linearGradient id="mg" x1="0" y1="0" x2="1" y2="1"><stop offset="0" stop-color="#1a86bd"/><stop offset="1" stop-color="#0b5b90"/></linearGradient></defs><path d="M3 26C8 18 20 22 26 9 30 2 37 4 40 12 46 24 44 34 38 39 30 46 14 45 7 37 3 33 2 29 3 26z" fill="url(#mg)"/></svg>
<div class="t" style="left:43px;top:808px;font-size:11.500px;line-height:14px;font-weight:bold;color:#d8eef8;letter-spacing:-.4px">magic</div>
<div class="a" style="left:65px;top:787px;width:17px;height:17px;border-radius:50%;background:#c8101a;color:#fff;font:bold 10px/17px 'Liberation Sans',sans-serif;text-align:center">40</div>
</body></html>
